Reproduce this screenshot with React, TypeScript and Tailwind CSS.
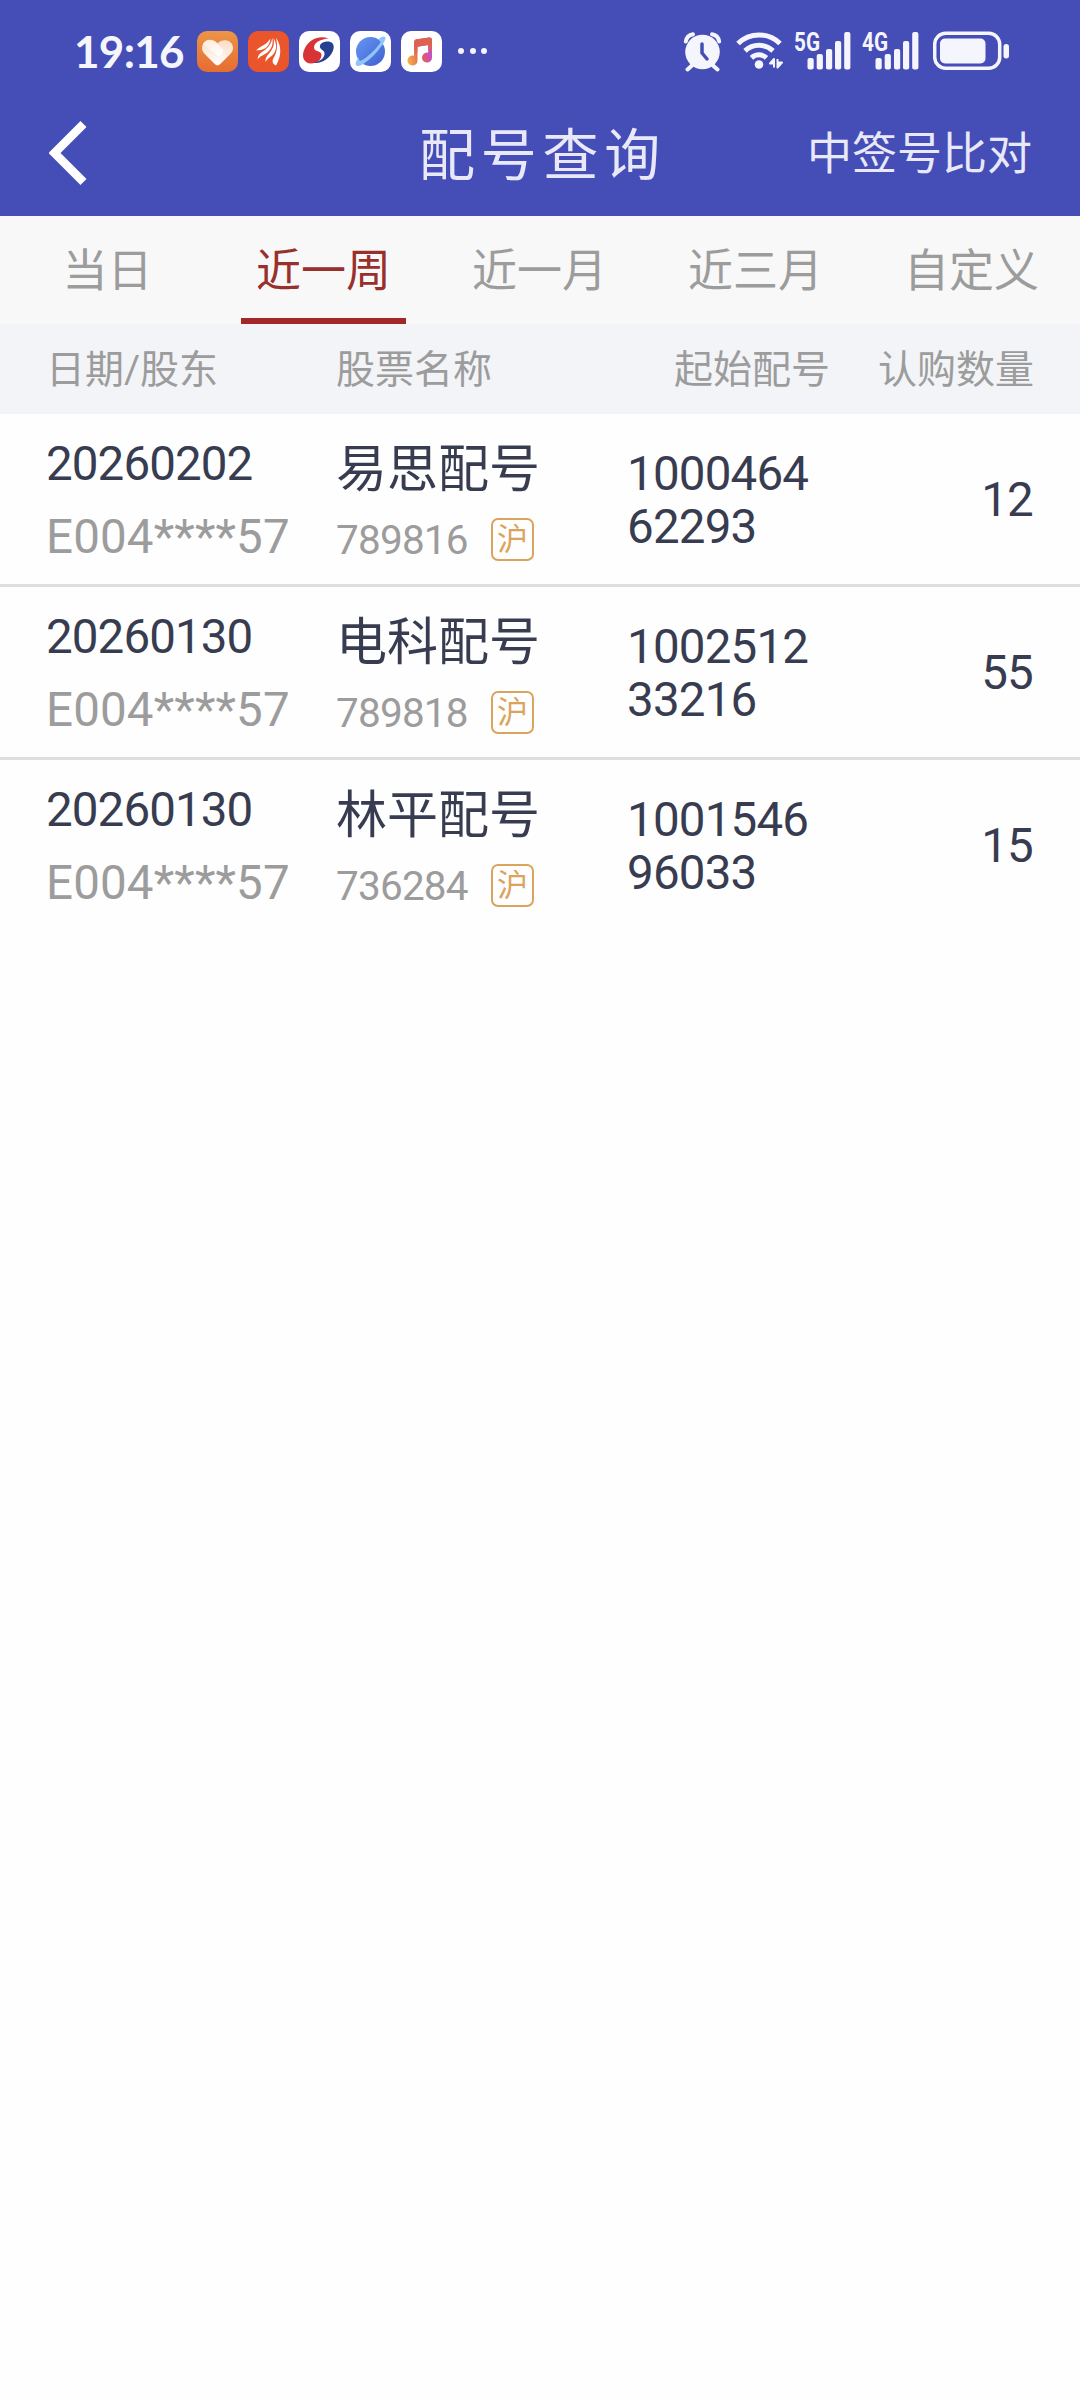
import clsx from "clsx";

const TABS = ["当日", "近一周", "近一月", "近三月", "自定义"];

const ROWS = [
  { date: "20260202", holder: "E004****57", name: "易思配号", code: "789816", start: ["1000464", "62293"], qty: "12" },
  { date: "20260130", holder: "E004****57", name: "电科配号", code: "789818", start: ["1002512", "33216"], qty: "55" },
  { date: "20260130", holder: "E004****57", name: "林平配号", code: "736284", start: ["1001546", "96033"], qty: "15" },
];

function AppIcons() {
  return (
    <div className="ml-[13px] flex gap-[10px]">
      <svg className="size-[41px]" viewBox="0 0 41 41">
        <defs>
          <linearGradient id="heartBg" x1="0" y1="0" x2="0" y2="1">
            <stop offset="0" stopColor="#ec9547" />
            <stop offset="1" stopColor="#e66c31" />
          </linearGradient>
          <linearGradient id="heartFill" x1="0" y1="0" x2="0" y2="1">
            <stop offset="0" stopColor="#fbdcc4" />
            <stop offset="1" stopColor="#fff" />
          </linearGradient>
          <linearGradient id="heartL" x1="0.9" y1="0.9" x2="0.1" y2="0.1">
            <stop offset="0" stopColor="#fff" />
            <stop offset="1" stopColor="#fdebdd" />
          </linearGradient>
        </defs>
        <rect width="41" height="41" rx="10" fill="url(#heartBg)" />
        <path
          d="M20.500 12.500c4-5.500 15.500-4.300 15.500 4.500 0 3-1.500 4.800-3.500 6.800L23 33.300c-1.600 1.500-3.400 1.500-5 0l-9.500-9.500C6.500 21.800 5 20 5 17c0-8.800 11.500-10 15.500-4.500z"
          fill="url(#heartFill)"
        />
        <path d="M6 13c2.500-5.500 9.500-5.500 13.500-1.500l5.500 6c3 4-1 9-5.500 6.500L12 18z" fill="url(#heartL)" />
      </svg>
      <svg className="size-[41px]" viewBox="0 0 41 41">
        <rect width="41" height="41" rx="10" fill="#ea552b" />
        <g fill="#fff">
          <path d="M8 19.500c4-4.500 10-5 14.500-12-1 7-4 9.500-8 11-2.500 1-4.500.7-6.500 1z" />
          <path d="M9.500 28.500c1-7 4-6.500 8-10 3.500-3 6-6.500 6.800-11.500 1.200 7-1 11-5 14.500-3.800 3-7 3-9.800 7z" />
          <path d="M17.500 31c-.5-5 2.500-7 5-10.500 3-4 4-7.500 3-13.500 4 6.500 3 12 0 16-3 3.500-6 4-8 8z" />
          <path d="M28 34.500c-3-1.500-4.500-4-2.500-7.500 3.500-5.500 4.500-12 2.500-20 4 5 6 14 2.500 22-.6 1.800-1.500 3.800-2.500 5.500z" />
        </g>
      </svg>
      <svg className="size-[41px]" viewBox="0 0 41 41">
        <rect width="41" height="41" rx="10" fill="#fff" />
        <path
          d="M29.500 7.500C21 4 10.500 8 6 17 1.500 25.500 5 32.500 12 32.500c6 0 10.500-4 10.500-8.500 0-4.500-7.500-3-7.500-7.500C15 11.500 22 8 29.500 7.500z"
          fill="#d83336"
        />
        <path
          d="M21 14.500c1.500-4 9.500-5.200 12.500-2.300 3.300 4-.3 12-6.500 16.200-4 2.800-9 4.200-12.500 3.100 7-.8 11.500-5 11-9.500-.4-3.500-5.600-3.500-4.500-7.500z"
          fill="#283f91"
        />
      </svg>
      <svg className="size-[41px]" viewBox="0 0 41 41">
        <defs>
          <linearGradient id="planet" x1="0" y1="0" x2="1" y2="1">
            <stop offset="0" stopColor="#6796f2" />
            <stop offset="1" stopColor="#3f60cf" />
          </linearGradient>
        </defs>
        <rect width="41" height="41" rx="10" fill="#fff" />
        <circle cx="20.500" cy="20.500" r="14.500" fill="url(#planet)" />
        <path
          d="M28 8.500C30.500 6 34 4.500 35.200 6c3 4.500-20 30-27.700 29-3.500-.5-1.500-5.500 1.500-9-.7 2.500 0 4 1.600 3.700C15 29 30 14.500 30.500 10.500c.1-1.300-1-2-2.500-2z"
          fill="#90c5fb"
        />
      </svg>
      <svg className="size-[41px]" viewBox="0 0 41 41">
        <defs>
          <linearGradient id="note" gradientUnits="userSpaceOnUse" x1="8" y1="33" x2="33" y2="26">
            <stop offset="0" stopColor="#f3ad4c" />
            <stop offset="0.5" stopColor="#e0634f" />
            <stop offset="1" stopColor="#c648df" />
          </linearGradient>
          <linearGradient id="noteTop" x1="0" y1="0" x2="0" y2="1">
            <stop offset="0" stopColor="#db6546" />
            <stop offset="0.55" stopColor="#dc5f5c" />
            <stop offset="1" stopColor="#dc5f5c" stopOpacity="0" />
          </linearGradient>
        </defs>
        <rect width="41" height="41" rx="10" fill="#fff" />
        <path
          d="M13 11.500c0-2 1-3 3-3.300l12-1.700c2-.3 3 .7 3 2.500v17.500a5 5 0 1 1-3.800-4.800V14l-10.700 1.700V29.500a5 5 0 1 1-3.500-4.700z"
          fill="url(#note)"
        />
        <path d="M13 11.500c0-2 1-3 3-3.300l12-1.700c2-.3 3 .7 3 2.500v12h-3.800V14l-10.700 1.700V24H13z" fill="url(#noteTop)" />
      </svg>
    </div>
  );
}

function Signal({ label }: { label: string }) {
  return (
    <svg className="h-[41px] w-[58px] overflow-visible" viewBox="0 0 58 41" fill="#f5f5fd">
      <text
        x="0"
        y="19.500"
        fontSize="25"
        fontWeight="700"
        fontFamily="Roboto, sans-serif"
        textLength="26"
        lengthAdjust="spacingAndGlyphs"
      >
        {label}
      </text>
      <rect x="13.500" y="27" width="6.200" height="11.500" rx="2" />
      <rect x="22.700" y="23" width="6.200" height="15.500" rx="2" />
      <rect x="32" y="18" width="6.200" height="20.500" rx="2" />
      <rect x="41" y="10" width="6.200" height="28.500" rx="2" />
      <rect x="50.200" y="1" width="6.200" height="37.500" rx="2" />
    </svg>
  );
}

function StatusBar() {
  return (
    <div className="flex h-[102px] items-center pl-[74px] text-[#f5f5fd]">
      <span className="w-[110px] font-['Lato'] text-[44px] leading-none font-bold tracking-[-0.700px] whitespace-nowrap">
        19:16
      </span>
      <AppIcons />
      <div className="ml-[16px] flex gap-[5.500px]">
        <i className="size-[6px] rounded-full bg-[#f5f5fd]" />
        <i className="size-[6px] rounded-full bg-[#f5f5fd]" />
        <i className="size-[6px] rounded-full bg-[#f5f5fd]" />
      </div>

      <div className="mr-[70px] ml-auto flex items-center">
        {/* alarm */}
        <svg className="h-[41px] w-[39px]" viewBox="0 0 39 41" fill="none" stroke="#f5f5fd">
          <circle cx="19.500" cy="21" r="17.300" fill="#f5f5fd" stroke="none" />
          <path d="M9 34.500l-4.500 4M30 34.500l4.500 4" strokeWidth="4" strokeLinecap="round" />
          <path
            d="M2.800 10.500C3.500 6.500 6 4 10 3.300M36.200 10.500C35.500 6.500 33 4 29 3.300"
            strokeWidth="4"
            strokeLinecap="round"
          />
          <path d="M19 13v9l5 6" stroke="#454db6" strokeWidth="3.500" strokeLinecap="round" strokeLinejoin="round" />
        </svg>
        {/* wifi */}
        <svg className="ml-[14px] h-[41px] w-[48px]" viewBox="0 0 48 41" fill="none" stroke="#f5f5fd">
          <path d="M2 12.500a30 30 0 0 1 42 0" strokeWidth="5" />
          <path d="M9 19.800a20.500 20.500 0 0 1 28 0" strokeWidth="5" />
          <path d="M15.500 26.800a11 11 0 0 1 15 0" strokeWidth="5" />
          <circle cx="23" cy="33.500" r="4.300" fill="#f5f5fd" stroke="none" />
          <path d="M38 36.500V28l-4 4.500h4M41.500 28v8.500l4.500-5h-4.500" strokeWidth="2" fill="#f5f5fd" strokeLinejoin="round" />
        </svg>
        <div className="ml-[10px]">
          <Signal label="5G" />
        </div>
        <div className="ml-[10px]">
          <Signal label="4G" />
        </div>
        {/* battery */}
        <svg className="ml-[13px] h-[41px] w-[77px]" viewBox="0 0 77 41">
          <rect x="1.700" y="2.300" width="65" height="35" rx="11" fill="none" stroke="#f5f5fd" strokeWidth="3.500" />
          <rect x="7" y="7.500" width="45.500" height="25" rx="5" fill="#f5f5fd" />
          <rect x="70.500" y="13" width="5.500" height="14.500" rx="2.700" fill="#f5f5fd" />
        </svg>
      </div>
    </div>
  );
}

export default function App() {
  return (
    <div className="min-h-[2400px] w-[1080px] bg-[#fefefe] font-['Roboto','Noto_Sans_CJK_SC',sans-serif]">
      <header className="h-[216px] bg-[#454db6]">
        <StatusBar />
        <div className="grid h-[102px] grid-cols-[1fr_auto_1fr] items-center text-[#e8e8f8]">
          <svg className="ml-[49px] h-[66px] w-[40px]" viewBox="0 0 40 66" fill="none" stroke="#fff" strokeWidth="8.500">
            <path d="M34.500 4L5.500 33l29 29" />
          </svg>
          <h1 className="pt-[5px] pl-[5px] text-[56px] leading-none tracking-[5.800px]">配号查询</h1>
          <span className="pt-[3px] pr-[48px] text-right text-[45px] leading-none">中签号比对</span>
        </div>
      </header>

      <nav className="grid h-[108px] grid-cols-5 bg-[#f8f8f8]">
        {TABS.map((tab, i) => (
          <div
            key={tab}
            className={clsx(
              "ml-[25px] flex h-full w-[165px] items-center justify-center border-b-6 pt-[8px] text-[45px] leading-none whitespace-nowrap",
              i === 1 ? "border-[#a12827] text-[#98302e]" : "border-transparent text-[#9c9c9c]",
            )}
          >
            {tab}
          </div>
        ))}
      </nav>

      <div className="flex h-[90px] items-center bg-[#f3f4f7] px-[46px] pt-[3px] text-[39px] leading-none text-[#9c9c9c]">
        <span className="w-[290px]">日期/股东</span>
        <span className="w-[290px]">股票名称</span>
        <span className="w-[204px] text-right">起始配号</span>
        <span className="ml-auto">认购数量</span>
      </div>

      <main className="divide-y-3 divide-[#dedede]">
        {ROWS.map((row) => (
          <div key={row.code} className="flex h-[173px] px-[46px] text-[#383c50] last:h-[170px]">
            <div className="w-[290px] pt-[22px] text-[47.500px] leading-[56px]">
              <p className="tracking-[-0.900px]">{row.date}</p>
              <p className="mt-[17px] tracking-[0.150px] text-[#9c9c9c]">{row.holder}</p>
            </div>
            <div className="w-[291px] pt-[28px]">
              <p className="text-[51px] leading-[56px]">{row.name}</p>
              <div className="mt-[20px] flex h-[42px] items-center">
                <span className="w-[155px] pt-[3px] text-[40.500px] leading-none tracking-[-0.800px] text-[#9c9c9c]">
                  {row.code}
                </span>
                <span className="flex size-[43px] items-center justify-center rounded-[7px] border-2 border-[#dba45c] text-[31px] leading-none text-[#dba45c]">
                  沪
                </span>
              </div>
            </div>
            <div className="h-[170px] pt-[34px] text-[47.500px] leading-[53px] tracking-[-0.800px]">
              {row.start.map((part) => (
                <p key={part}>{part}</p>
              ))}
            </div>
            <div className="mr-px ml-auto flex h-[170px] items-center pt-[3px] text-[47.500px] leading-none tracking-[-0.800px]">
              {row.qty}
            </div>
          </div>
        ))}
      </main>
    </div>
  );
}
